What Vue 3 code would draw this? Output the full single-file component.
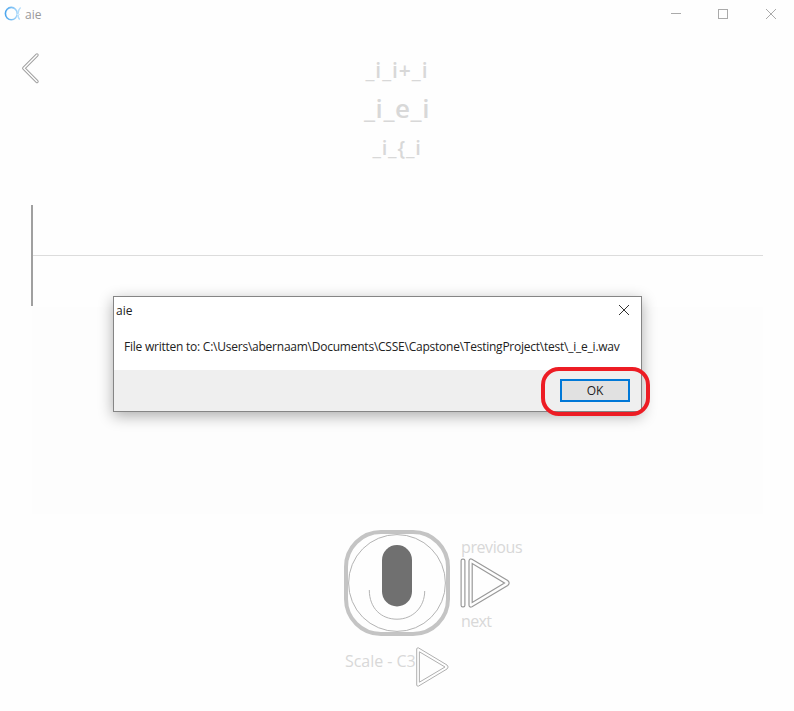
<script setup>
const words = [
  { text: '_i_i+_i', kind: 'before' },
  { text: '_i_e_i', kind: 'current' },
  { text: '_i_{_i', kind: 'after' },
]
const message = 'File written to: C:\\Users\\abernaam\\Documents\\CSSE\\Capstone\\TestingProject\\test\\_i_e_i.wav'
</script>

<template>
  <div class="window">
    <header class="titlebar">
      <svg class="logo" width="18" height="16" viewBox="0 0 18 16" fill="none">
        <defs>
          <linearGradient id="logoStroke" x1="0" x2="1">
            <stop offset="0" stop-color="#4da6ed" />
            <stop offset="1" stop-color="#a5d6fa" />
          </linearGradient>
        </defs>
        <ellipse cx="7.3" cy="7.6" rx="5.9" ry="6.2" stroke="url(#logoStroke)" stroke-width="1.6" />
        <path d="M16.6 1.5C13.6 4 13 11 15.8 13.6" stroke="#b5ddfb" stroke-width="1.4" />
        <path d="M12.5 8.5H16" stroke="#d8edfc" />
      </svg>
      <span class="app-name">aie</span>
      <div class="caption-buttons">
        <svg width="12" height="12" viewBox="0 0 12 12" stroke="#aaa" fill="none"><path d="M1 5.5H11" /></svg>
        <svg width="12" height="12" viewBox="0 0 12 12" stroke="#aaa" fill="none"><rect x="1.5" y="1.5" width="9" height="9" /></svg>
        <svg width="12" height="12" viewBox="0 0 12 12" stroke="#aaa" fill="none"><path d="M1 1L11 11M11 1L1 11" /></svg>
      </div>
    </header>

    <section class="heading">
      <svg class="back" width="20" height="32" viewBox="0 0 20 32" fill="none">
        <path d="M17 3L3.8 16.3L17 29.5" stroke="#a0a0a0" stroke-width="3.4" stroke-linecap="round" stroke-linejoin="round" />
        <path d="M17 3L3.8 16.3L17 29.5" stroke="#fff" stroke-width="1.4" stroke-linecap="round" stroke-linejoin="round" />
      </svg>
      <div class="words">
        <span v-for="word in words" :key="word.kind" :class="['word', word.kind]">{{ word.text }}</span>
      </div>
    </section>

    <section class="waveform"><div class="axis"></div></section>
    <section class="spectrogram"></section>

    <section class="controls">
      <button class="record">
        <svg width="98" height="98" viewBox="0 0 98 98" fill="none">
          <circle cx="49" cy="49" r="48.4" stroke="#aaa" stroke-width=".9" />
          <rect x="34" y="11" width="30" height="61.5" rx="15" fill="#707070" />
          <path d="M21.3 56C21.3 74 33 85.2 49 85.2S76.7 73 76.7 57" stroke="#b4b4b4" />
        </svg>
      </button>
      <div class="nav">
        <span class="label previous">previous</span>
        <svg width="52" height="50" viewBox="0 0 52 50" fill="none" stroke="#999" stroke-width="1.2">
          <rect x="1.1" y="1.1" width="3.8" height="47.8" rx="1.6" />
          <path d="M9 3Q9.2.2 12 1.2L47.7 22.5Q50.6 25 47.7 27.5L12 48.8Q9.2 49.8 9 47Z" />
          <path d="M12.2 5.5V44.5L44.5 25Z" />
        </svg>
        <span class="label next">next</span>
      </div>
    </section>

    <section class="scale">
      <span class="label scale-label">Scale - C3</span>
      <svg width="34" height="40" viewBox="0 0 34 40" fill="none" stroke="#b0b0b0">
        <path d="M.7 2Q.9.4 2.5.9L31 18Q33.4 20 31 22L2.5 39.1Q.9 39.6.7 38Z" />
        <path d="M3.4 4.8V35.2L29 20Z" />
      </svg>
    </section>

    <div class="dialog">
      <div class="dialog-title">
        <span class="dialog-name">aie</span>
        <svg width="12" height="12" viewBox="0 0 12 12" stroke="#333" fill="none"><path d="M1 1L11 11M11 1L1 11" /></svg>
      </div>
      <div class="dialog-body"><span class="message">{{ message }}</span></div>
      <div class="dialog-footer">
        <button class="ok">OK</button>
        <div class="ring"></div>
      </div>
    </div>
  </div>
</template>

<style>
body { margin: 0; background: #fff; }
</style>

<style scoped>
* { box-sizing: border-box; }
.window {
  position: relative;
  width: 794px;
  height: 711px;
  overflow: hidden;
  display: flex;
  flex-direction: column;
  background: #fefefe;
  font-family: "Open Sans", "Noto Sans", sans-serif;
}
svg { display: block; flex: none; }
span { white-space: nowrap; }
.titlebar { height: 28px; flex: none; display: flex; align-items: center; padding: 0 17px 0 4px; }
.app-name { margin-left: 3px; font-size: 12px; color: #999; }
.caption-buttons { margin-left: auto; display: flex; gap: 36px 35px; }
.caption-buttons svg:last-child { margin-left: 1px; }
.heading { height: 177px; flex: none; display: flex; padding: 24px 20px 0; }
.back { margin-right: -20px; }
.words { flex: 1; display: flex; flex-direction: column; align-items: center; color: #d8d8d8; font-weight: 600; }
.word { line-height: 38px; }
.before { font-size: 21px; height: 38px; margin-top: -1px; letter-spacing: .95px; }
.current { font-size: 26px; height: 41px; letter-spacing: .6px; }
.after { font-size: 20px; margin-top: -1px; letter-spacing: .8px; }
.waveform {
  height: 101px;
  flex: none;
  margin: 0 31px;
  border-left: 2px solid #a0a0a0;
  padding-top: 50px;
}
.axis { height: 1px; background: #dcdcdc; }
.spectrogram { height: 207px; flex: none; margin: 1px 31px 0 32px; background: #fdfdfd; }
.controls { height: 122px; flex: none; display: flex; padding: 16px 0 0 344px; }
.record {
  width: 106px;
  height: 106px;
  padding: 0;
  border: 4px solid #c4c4c4;
  border-radius: 37px;
  background: #fefefe;
}
.nav { display: flex; flex-direction: column; padding: 6px 0 0 10px; }
.label { font-size: 16px; line-height: 22px; color: #d8d8d8; }
.previous { margin-left: 1px; letter-spacing: -.4px; }
.next { margin-left: 1px; margin-top: 2px; letter-spacing: -.6px; }
.scale { display: flex; padding: 11px 0 0 345px; }
.scale-label { width: 71px; margin-top: 3px; letter-spacing: -.05px; }
.dialog {
  position: absolute;
  left: 113px;
  top: 296px;
  width: 529px;
  height: 116px;
  border: 1px solid #858585;
  background: #fff;
  box-shadow: 0 4px 14px rgba(0, 0, 0, .32);
  display: flex;
  flex-direction: column;
  color: #222;
  font-size: 12px;
}
.dialog-title { height: 26px; display: flex; align-items: center; justify-content: space-between; padding: 0 11px 0 2px; }
.dialog-body { height: 47px; padding: 14px 10px 0; line-height: 20px; }
.message { letter-spacing: -.237px; }
.dialog-footer {
  position: relative;
  flex: 1;
  background: #efefef;
  display: flex;
  justify-content: flex-end;
  align-items: flex-start;
  padding: 9px 11px;
}
.ok {
  width: 70px;
  height: 23px;
  padding: 0;
  border: 2px solid #0078d7;
  background: #e1e1e1;
  color: #222;
  font: inherit;
  line-height: 18px;
}
.ring {
  position: absolute;
  left: 427px;
  top: -3px;
  width: 109px;
  height: 49px;
  border: 4px solid #ed1c24;
  border-radius: 18px;
}
</style>
